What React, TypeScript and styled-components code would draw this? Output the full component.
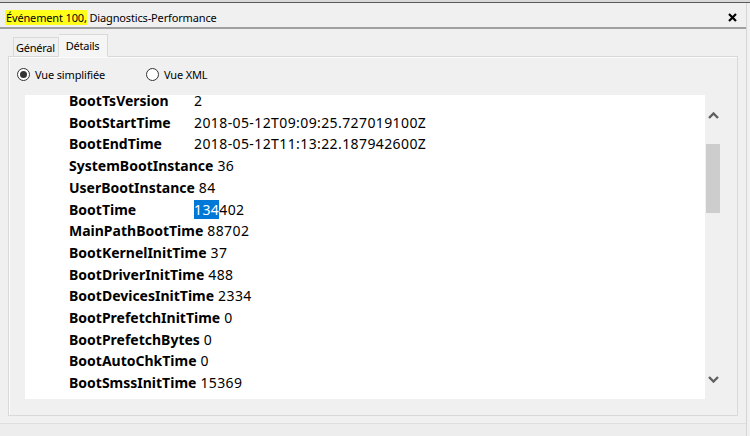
import styled, { createGlobalStyle } from 'styled-components';

const GlobalStyle = createGlobalStyle`
  html, body {
    margin: 0;
    padding: 0;
    background: #f0f0f0;
  }
  body {
    font-family: 'Noto Sans', 'Open Sans', sans-serif;
    color: #000;
  }
`;

const Frame = styled.div`
  width: 750px;
  height: 436px;
  overflow: hidden;
  background: #f0f0f0;
  display: flex;
  flex-direction: column;
  border-top: 2px solid #d9d9d9;
  box-sizing: border-box;
`;

const TopEdge = styled.div`
  height: 1px;
  background: #5a5a5a;
`;

const Main = styled.div`
  width: 746px;
  flex: 1;
  display: flex;
  flex-direction: column;
  border-right: 1px solid #d6d6d6;
`;

const TitleBar = styled.div`
  height: 26px;
  flex-shrink: 0;
  box-sizing: border-box;
  display: flex;
  align-items: center;
  justify-content: space-between;
  padding: 4px 9px 0 5px;
  border-bottom: 2px solid #a0a0a0;
`;

const Title = styled.div`
  font-size: 11px;
  letter-spacing: -0.15px;
  white-space: nowrap;
`;

const Mark = styled.span`
  background: #ffff1a;
  padding-left: 1px;
`;

const Close = styled.svg`
  width: 9px;
  height: 9px;
`;

const Body = styled.div`
  display: flex;
  flex-direction: column;
  padding: 5px 0 0 8px;
`;

const TabRow = styled.div`
  display: flex;
  align-items: flex-end;
  padding-left: 5px;
  height: 22px;
  position: relative;
  z-index: 1;
`;

const Tab = styled.div<{ $active?: boolean }>`
  font-size: 11px;
  letter-spacing: -0.25px;
  box-sizing: border-box;
  height: ${(p) => (p.$active ? '23px' : '19px')};
  padding: ${(p) => (p.$active ? '3px 8px 0 7px' : '2px 3px 0 2px')};
  border: 1px solid #d9d9d9;
  border-bottom: ${(p) => (p.$active ? '1px solid #f5f5f5' : 'none')};
  border-left: ${(p) => (p.$active ? 'none' : '1px solid #d9d9d9')};
  background: ${(p) => (p.$active ? '#f5f5f5' : '#f0f0f0')};
  margin-bottom: ${(p) => (p.$active ? '-1px' : '0')};
`;

const Panel = styled.div`
  width: 730px;
  height: 360px;
  box-sizing: border-box;
  border: 1px solid #d9d9d9;
  box-shadow: inset 1px 1px 0 #fbfbfb;
  display: flex;
  flex-direction: column;
  padding: 9px 0 0 8px;
`;

const RadioRow = styled.div`
  display: flex;
  align-items: center;
  height: 16px;
`;

const RadioOption = styled.label<{ $width: number }>`
  display: flex;
  align-items: center;
  width: ${(p) => p.$width}px;
  font-size: 11px;
  letter-spacing: -0.15px;
  gap: 5px;
`;

const RadioDot = styled.span<{ $checked?: boolean }>`
  width: 11px;
  height: 11px;
  border-radius: 50%;
  border: 1px solid #333;
  background: #fff;
  display: flex;
  align-items: center;
  justify-content: center;

  &::after {
    content: '';
    width: 7px;
    height: 7px;
    border-radius: 50%;
    background: ${(p) => (p.$checked ? '#333' : 'transparent')};
  }
`;

const ViewBox = styled.div`
  margin: 13px 0 0 8px;
  width: 697px;
  height: 304px;
  display: flex;
`;

const Content = styled.div`
  width: 680px;
  height: 100%;
  background: #fff;
  padding-left: 44px;
  box-sizing: border-box;
`;

const List = styled.div`
  margin-top: -5px;
  font-size: 14px;
  line-height: 21.7px;
`;

const Row = styled.div`
  display: flex;
  white-space: nowrap;
`;

const Key = styled.span`
  font-weight: 700;
  min-width: 121px;
  margin-right: 4px;
`;

const Value = styled.span`
  letter-spacing: 0.4px;
`;

const Selected = styled.span`
  background: #0078d7;
  color: #fff;
`;

const ScrollBar = styled.div`
  width: 17px;
  display: flex;
  flex-direction: column;
  background: #f0f0f0;
`;

const ArrowButton = styled.div`
  height: 40px;
  display: flex;
  align-items: center;
  justify-content: center;
`;

const Track = styled.div`
  flex: 1;
  padding: 9px 2px 0 1px;
`;

const Thumb = styled.div`
  height: 69px;
  background: #cdcdcd;
`;

const Footer = styled.div`
  flex: 1;
  margin-top: 7px;
  border-top: 1px solid #dedede;
  background: #ededed;
`;

const rows: [string, string][] = [
  ['BootTsVersion', '2'],
  ['BootStartTime', '2018-05-12T09:09:25.727019100Z'],
  ['BootEndTime', '2018-05-12T11:13:22.187942600Z'],
  ['SystemBootInstance', '36'],
  ['UserBootInstance', '84'],
  ['BootTime', '134402'],
  ['MainPathBootTime', '88702'],
  ['BootKernelInitTime', '37'],
  ['BootDriverInitTime', '488'],
  ['BootDevicesInitTime', '2334'],
  ['BootPrefetchInitTime', '0'],
  ['BootPrefetchBytes', '0'],
  ['BootAutoChkTime', '0'],
  ['BootSmssInitTime', '15369'],
];

const Chevron = ({ up }: { up?: boolean }) => (
  <svg width="11" height="7" viewBox="0 0 11 7">
    <path
      d={up ? 'M1 6 L5.5 1.5 L10 6' : 'M1 1 L5.5 5.5 L10 1'}
      fill="none"
      stroke="#606060"
      strokeWidth="2.4"
    />
  </svg>
);

export default function App() {
  return (
    <>
      <GlobalStyle />
      <Frame>
        <TopEdge />
        <Main>
          <TitleBar>
            <Title>
              <Mark>Événement 100,</Mark> Diagnostics-Performance
            </Title>
            <Close viewBox="0 0 9 9">
              <path d="M1 1 L8 8 M8 1 L1 8" stroke="#000" strokeWidth="2.2" />
            </Close>
          </TitleBar>
          <Body>
            <TabRow>
              <Tab>Général</Tab>
              <Tab $active>Détails</Tab>
            </TabRow>
            <Panel>
              <RadioRow>
                <RadioOption $width={129}>
                  <RadioDot $checked />
                  Vue simplifiée
                </RadioOption>
                <RadioOption $width={120}>
                  <RadioDot />
                  Vue XML
                </RadioOption>
              </RadioRow>
              <ViewBox>
                <Content>
                  <List>
                    {rows.map(([k, v]) => (
                      <Row key={k}>
                        <Key>{k}</Key>
                        {k === 'BootTime' ? (
                          <Value>
                            <Selected>134</Selected>402
                          </Value>
                        ) : (
                          <Value>{v}</Value>
                        )}
                      </Row>
                    ))}
                  </List>
                </Content>
                <ScrollBar>
                  <ArrowButton>
                    <Chevron up />
                  </ArrowButton>
                  <Track>
                    <Thumb />
                  </Track>
                  <ArrowButton>
                    <Chevron />
                  </ArrowButton>
                </ScrollBar>
              </ViewBox>
            </Panel>
          </Body>
          <Footer />
        </Main>
      </Frame>
    </>
  );
}
